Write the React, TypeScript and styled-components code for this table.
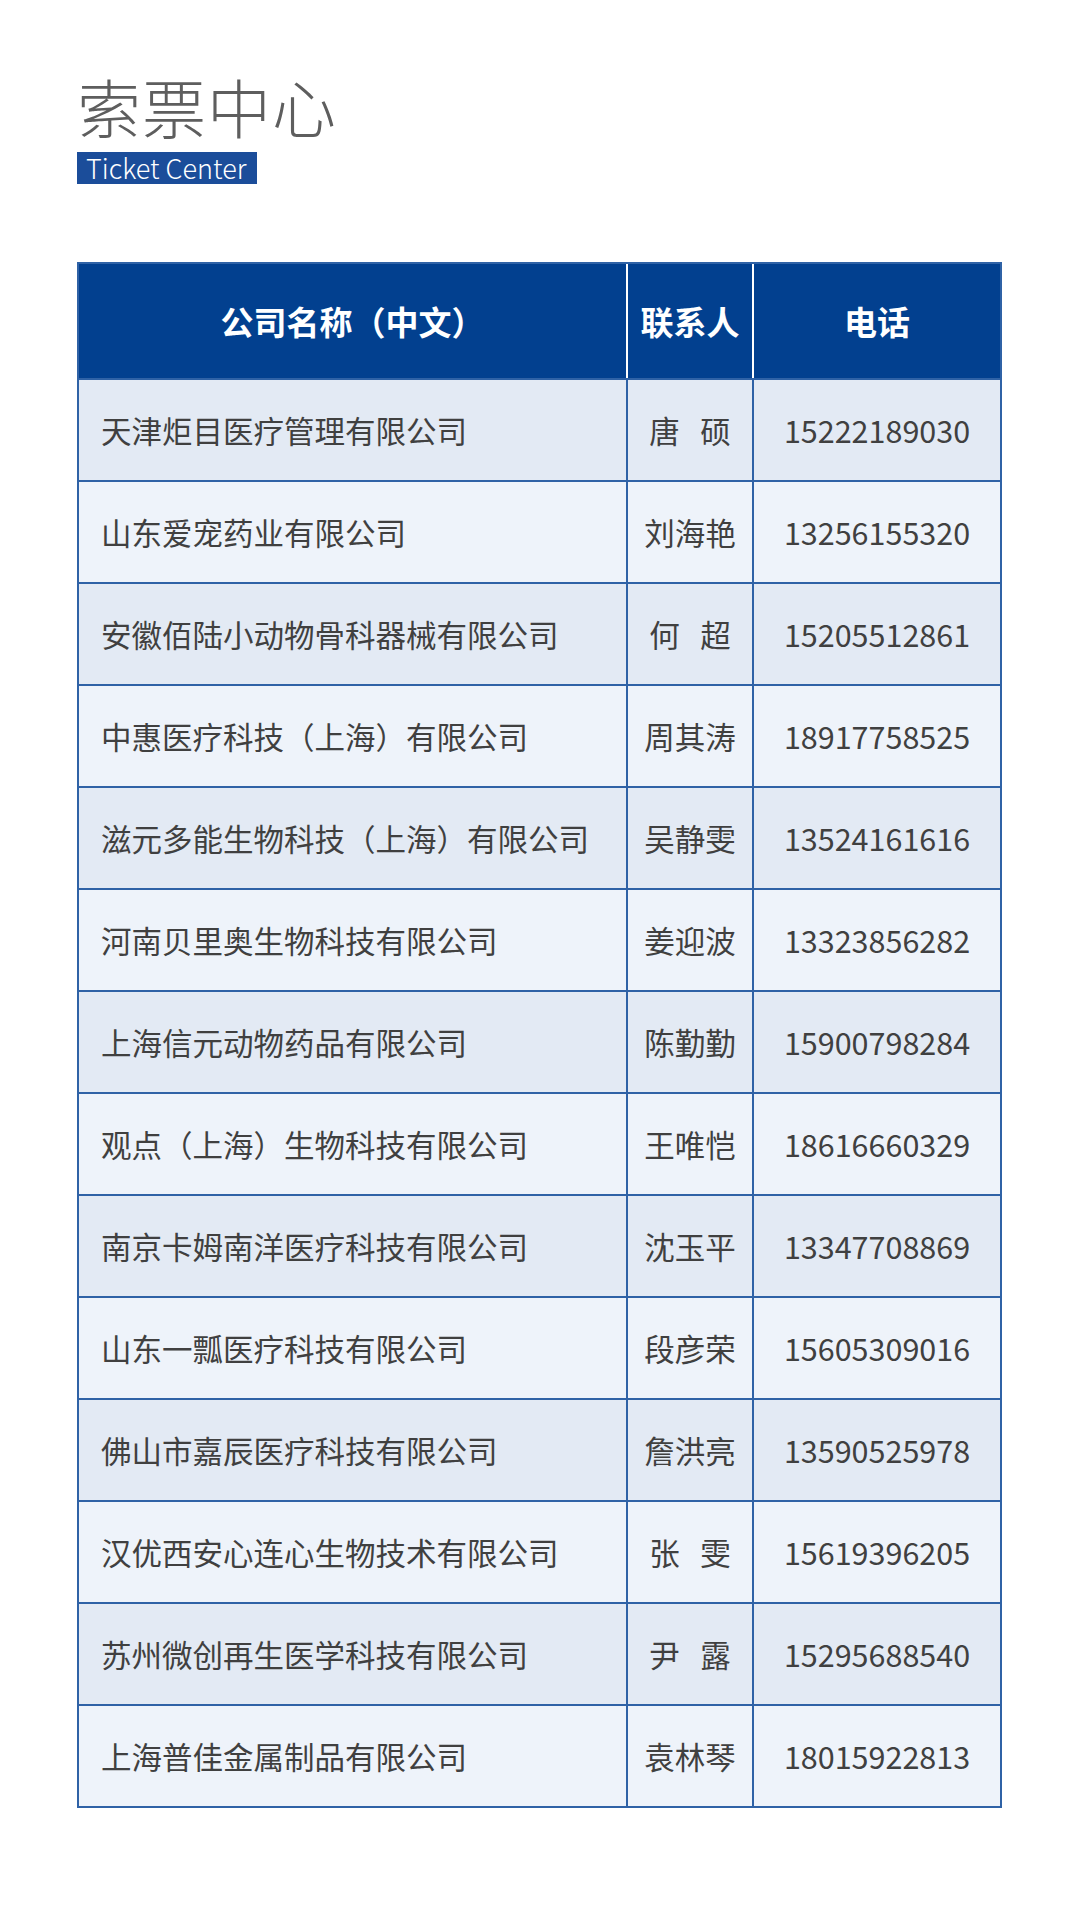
import React from "react";
import styled, { createGlobalStyle } from "styled-components";

const GlobalStyle = createGlobalStyle`
  html, body {
    margin: 0;
    padding: 0;
    background: #ffffff;
  }
  body {
    font-family: "Noto Sans CJK SC", "Noto Sans", sans-serif;
  }
`;

const Page = styled.div`
  width: 1080px;
  min-height: 1928px;
  box-sizing: border-box;
  padding: 73px 78px 0 77px;
  display: flex;
  flex-direction: column;
  align-items: flex-start;
`;

const Title = styled.h1`
  margin: 0;
  font-size: 64px;
  line-height: 64px;
  font-weight: 300;
  color: #5e5e5e;
  letter-spacing: 1px;
`;

const SubTitle = styled.div`
  margin-top: 15px;
  height: 32px;
  box-sizing: border-box;
  padding: 0 11px 0 9px;
  background: #1b4d9a;
  color: #ffffff;
  font-size: 27px;
  font-weight: 300;
  line-height: 32px;
  white-space: nowrap;
`;

const Table = styled.div`
  margin-top: 78px;
  width: 925px;
  box-sizing: border-box;
  border: 2px solid #2f62a6;
  display: flex;
  flex-direction: column;
`;

const Row = styled.div<{ $head?: boolean; $alt?: boolean }>`
  display: grid;
  grid-template-columns: 547px 126px 1fr;
  height: ${(p) => (p.$head ? "114px" : "102px")};
  box-sizing: border-box;
  border-top: ${(p) => (p.$head ? "none" : "2px solid #2f62a6")};
  background: ${(p) => (p.$head ? "#02408f" : p.$alt ? "#eef3fa" : "#e3eaf4")};
`;

const Cell = styled.div<{ $head?: boolean; $align?: "left" | "center"; $first?: boolean }>`
  display: flex;
  align-items: center;
  justify-content: ${(p) => (p.$align === "left" ? "flex-start" : "center")};
  box-sizing: border-box;
  padding-left: ${(p) => (p.$align === "left" ? "22px" : "0")};
  border-left: ${(p) =>
    p.$first ? "none" : `2px solid ${p.$head ? "#ffffff" : "#2f62a6"}`};
  font-size: ${(p) => (p.$head ? "33px" : "30.5px")};
  font-weight: ${(p) => (p.$head ? 700 : 400)};
  color: ${(p) => (p.$head ? "#ffffff" : "#404040")};
  white-space: pre;
`;

const rows: [string, string, string][] = [
  ["天津炬目医疗管理有限公司", "唐   硕", "15222189030"],
  ["山东爱宠药业有限公司", "刘海艳", "13256155320"],
  ["安徽佰陆小动物骨科器械有限公司", "何   超", "15205512861"],
  ["中惠医疗科技（上海）有限公司", "周其涛", "18917758525"],
  ["滋元多能生物科技（上海）有限公司", "吴静雯", "13524161616"],
  ["河南贝里奥生物科技有限公司", "姜迎波", "13323856282"],
  ["上海信元动物药品有限公司", "陈勤勤", "15900798284"],
  ["观点（上海）生物科技有限公司", "王唯恺", "18616660329"],
  ["南京卡姆南洋医疗科技有限公司", "沈玉平", "13347708869"],
  ["山东一瓢医疗科技有限公司", "段彦荣", "15605309016"],
  ["佛山市嘉辰医疗科技有限公司", "詹洪亮", "13590525978"],
  ["汉优西安心连心生物技术有限公司", "张   雯", "15619396205"],
  ["苏州微创再生医学科技有限公司", "尹   露", "15295688540"],
  ["上海普佳金属制品有限公司", "袁林琴", "18015922813"],
];

export default function App() {
  return (
    <>
      <GlobalStyle />
      <Page>
        <Title>索票中心</Title>
        <SubTitle>Ticket Center</SubTitle>
        <Table>
          <Row $head>
            <Cell $head $first>公司名称（中文）</Cell>
            <Cell $head>联系人</Cell>
            <Cell $head>电话</Cell>
          </Row>
          {rows.map(([company, person, phone], i) => (
            <Row key={company} $alt={i % 2 === 1}>
              <Cell $first $align="left">{company}</Cell>
              <Cell>{person}</Cell>
              <Cell>{phone}</Cell>
            </Row>
          ))}
        </Table>
      </Page>
    </>
  );
}
